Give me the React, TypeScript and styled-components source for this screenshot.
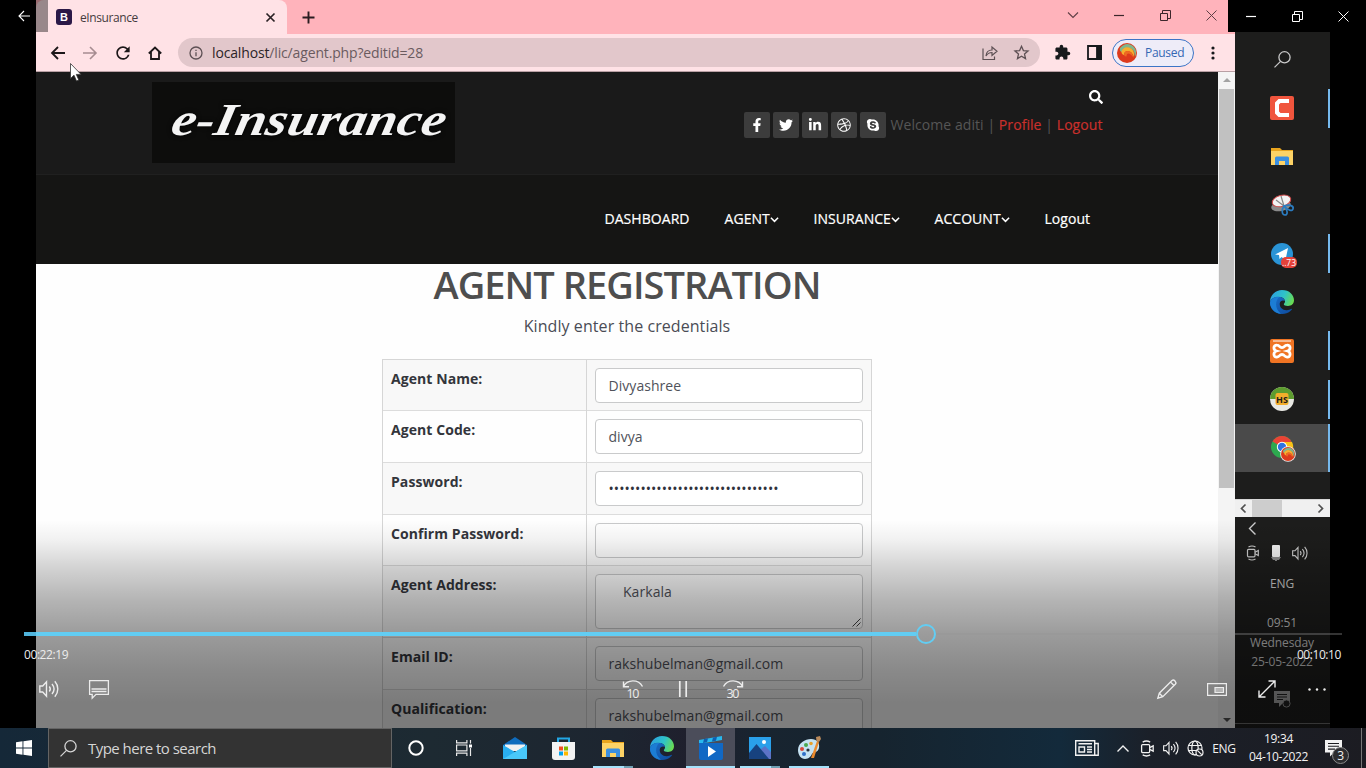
import React from 'react';
import styled, { createGlobalStyle } from 'styled-components';
import { FaFacebookF, FaTwitter, FaLinkedinIn, FaDribbble, FaSkype, FaSearch } from 'react-icons/fa';
import { MdExtension, MdRefresh } from 'react-icons/md';

const GlobalStyle = createGlobalStyle`
  * { box-sizing: border-box; }
  body { margin: 0; background: #000; overflow: hidden; }
  svg { display: block; flex: none; overflow: visible; }
`;

const sans = `'Open Sans', 'Noto Sans', sans-serif`;

const Desktop = styled.div`
  width: 1366px;
  height: 768px;
  display: flex;
  flex-direction: column;
  font-family: ${sans};
  background: #000;
`;

const Player = styled.main`
  position: relative;
  height: 728px;
  padding: 0 36px;
  display: flex;
`;

/* ---------- recorded browser ---------- */

const Browser = styled.section`
  width: 1199px;
  height: 728px;
  display: flex;
  flex-direction: column;
  overflow: hidden;
`;

const TabStrip = styled.div`
  height: 34px;
  display: flex;
  align-items: stretch;
  background: #ffb3bb;
`;

const Tab = styled.div`
  width: 251px;
  padding: 0 12px 0 20px;
  display: flex;
  align-items: center;
  border-radius: 8px 8px 0 0;
  background: #ffe2e6;
`;

const Favicon = styled.div`
  width: 16px;
  height: 16px;
  border-radius: 3px;
  background: #2b1847;
  color: #fff;
  font: 700 11px/16px 'Liberation Sans', sans-serif;
  text-align: center;
`;

const TabTitle = styled.span`
  flex: 1;
  margin-left: 8px;
  font-size: 12px;
  letter-spacing: -0.4px;
  color: #453b3e;
`;

const TabActions = styled.div`
  flex: 1;
  padding: 0 18px 4px 15px;
  display: flex;
  align-items: center;
  justify-content: space-between;
`;

const NewTab = styled.span`
  padding-top: 4px;
`;

const WindowIcons = styled.div`
  display: flex;
  align-items: center;
  gap: 35.5px;
`;

const Toolbar = styled.div`
  height: 38px;
  padding: 0 13px 0 15px;
  display: flex;
  align-items: center;
  background: #ffe2e6;
  border-bottom: 1px solid #b9a0a4;
`;

const NavIcons = styled.div`
  width: 127px;
  display: flex;
  align-items: center;
  gap: 17px;
  color: #1c1719;
  > :last-child { margin-left: -2px; }
`;

const AddressBar = styled.div`
  width: 862px;
  height: 29px;
  border-radius: 15px;
  padding: 0 11px 0 11px;
  display: flex;
  align-items: center;
  background: #e2c7cb;
`;

const Url = styled.span`
  flex: 1;
  margin-left: 9px;
  font-size: 14px;
  letter-spacing: -0.15px;
  color: #6a5b5f;
  b { font-weight: 400; color: #2b2427; }
`;

const AddressActions = styled.div`
  display: flex;
  gap: 16px;
`;

const ToolbarEnd = styled.div`
  margin-left: 14px;
  display: flex;
  align-items: center;
  color: #17191c;
  gap: 15.5px;
`;

const ProfilePill = styled.div`
  width: 82px;
  height: 28px;
  margin: 0 1px 0 -5px;
  padding-left: 4px;
  display: flex;
  align-items: center;
  gap: 8px;
  border: 1.5px solid #3c74c6;
  border-radius: 14px;
  background: #eeecf8;
  color: #3568b4;
  font-size: 12px;
  letter-spacing: -0.3px;
`;

const Viewport = styled.div`
  height: 656px;
  display: flex;
`;

const Page = styled.div`
  width: 1182px;
  height: 656px;
  overflow: hidden;
  background: #fefefe;
`;

const TopBar = styled.header`
  height: 102px;
  padding: 10px 115.5px 0 116px;
  display: flex;
  justify-content: space-between;
  background: #1a1a1a;
`;

const Logo = styled.div`
  width: 303px;
  height: 81px;
  display: flex;
  align-items: center;
  justify-content: center;
  background: #0d0d0c;
  span {
    padding: 0 2px 6px 12px;
    font: italic 700 46px/1 'Liberation Serif', serif;
    color: #f4f4f4;
    text-shadow: 0 0 5px #000;
    white-space: nowrap;
    transform: scaleX(1.19) skewX(-10deg);
  }
`;

const Account = styled.div`
  display: flex;
  flex-direction: column;
  align-items: flex-end;
  color: #fff;
  padding-top: 8px;
  gap: 8px;
`;

const AccountRow = styled.div`
  display: flex;
  align-items: center;
  white-space: nowrap;
`;

const Social = styled.span`
  width: 26px;
  height: 26px;
  margin-right: 3px;
  border-radius: 2px;
  display: flex;
  align-items: center;
  justify-content: center;
  background: #3c3c3c;
  font-size: 14px;
`;

const Welcome = styled.span`
  margin-left: 1px;
  padding-bottom: 2px;
  font-size: 14px;
  letter-spacing: 0.07px;
  color: #565656;
  i { font-style: normal; color: #c9302c; -webkit-text-stroke: 0.2px #c9302c; }
`;

const Menu = styled.nav`
  height: 90px;
  padding: 0 127.5px 2px 0;
  display: flex;
  align-items: center;
  justify-content: flex-end;
  gap: 34px;
  background: #151514;
  border-top: 1px solid #202020;
  color: #fff;
  font-size: 14px;
  letter-spacing: 0.05px;
  -webkit-text-stroke: 0.2px #fff;
`;

const MenuItem = styled.span<{ $w: number }>`
  width: ${p => p.$w}px;
  display: flex;
  align-items: center;
  white-space: nowrap;
  svg { margin-top: 3px; }
`;

const Title = styled.h1`
  margin: 0;
  text-align: center;
  font-size: 38px;
  line-height: 40px;
  font-weight: 600;
  letter-spacing: -0.95px;
  color: #4e4e4e;
`;

const Subtitle = styled.p`
  margin: 12px 0 22px;
  text-align: center;
  font-size: 16px;
  line-height: 21px;
  letter-spacing: 0.07px;
  color: #4a4c55;
`;

const Form = styled.div`
  width: 490px;
  margin: 0 auto;
  border: 1px solid #d6d6d6;
  border-bottom: 0;
`;

const Row = styled.div<{ $h: number; $odd?: boolean }>`
  height: ${p => p.$h}px;
  display: grid;
  grid-template-columns: 203px 1fr;
  background: ${p => (p.$odd ? '#f8f8f8' : '#fefefe')};
  border-bottom: 1px solid #dcdcdc;
`;

const Label = styled.label`
  padding: 8.5px 8px;
  font-size: 14px;
  line-height: 20px;
  font-weight: 700;
  color: #33353b;
  letter-spacing: 0.07px;
`;

const Cell = styled.div`
  padding: 8px;
  border-left: 1px solid #d6d6d6;
`;

const Field = styled.div<{ $tall?: boolean; $secret?: boolean }>`
  position: relative;
  height: ${p => (p.$tall ? 55 : 35)}px;
  padding: ${p => (p.$tall ? '6.5px 27px' : p.$secret ? '7px 12.5px' : '6.5px 12.5px')};
  border: 1px solid #c9cacb;
  border-radius: 4px;
  background: #fff;
  font-size: 14px;
  line-height: 20px;
  letter-spacing: 0.05px;
  color: ${p => (p.$secret ? '#30323c' : '#50525a')};
  white-space: nowrap;
`;

const Grip = styled.span`
  position: absolute;
  right: 1px;
  bottom: 1px;
`;

const VScroll = styled.div`
  width: 17px;
  display: flex;
  flex-direction: column;
  align-items: center;
  background: #f4f4f4;
  padding-bottom: 6px;
`;

const VThumb = styled.div`
  width: 15px;
  height: 399px;
  margin: 7px 0 auto;
  background: #c1c1c1;
`;

/* ---------- recorded vertical taskbar ---------- */

const SideBar = styled.aside`
  width: 95px;
  height: 728px;
  display: flex;
  flex-direction: column;
  background: #1d1d1c;
`;

const SideApps = styled.div`
  height: 499px;
  padding-top: 35.5px;
`;

const SideSlot = styled.div<{ $bar?: boolean; $active?: boolean }>`
  height: 48.5px;
  padding-right: 1px;
  display: flex;
  align-items: center;
  justify-content: center;
  background: ${p =>
    p.$active
      ? 'linear-gradient(to left, #76b9ed 2px, #4a4a4a 2px)'
      : p.$bar
        ? 'linear-gradient(#76b9ed, #76b9ed) right center / 2px 39px no-repeat'
        : 'none'};
`;

const HScroll = styled.div`
  height: 18px;
  border-top: 1px solid #d8d8d8;
  display: flex;
  align-items: center;
  justify-content: space-between;
  padding: 0 7px 0 6px;
  color: #505050;
  background: linear-gradient(to right, #f0f0f0 17px, #cdcdcd 17px 47px, #f0f0f0 47px);
`;

const SideTray = styled.div`
  height: 211px;
  flex: none;
  display: flex;
  flex-direction: column;
  align-items: center;
  font-size: 12px;
  line-height: 16px;
  letter-spacing: -0.1px;
  color: #cfcfcf;
`;

const SideIconRow = styled.div<{ $top: number; $left?: number; $gap?: number }>`
  width: 95px;
  margin-top: ${p => p.$top}px;
  padding-left: ${p => p.$left ?? 0}px;
  display: flex;
  align-items: center;
  gap: ${p => p.$gap ?? 0}px;
`;

const SideText = styled.span<{ $top: number }>`
  margin-top: ${p => p.$top}px;
  padding-right: 1px;
`;

const SideEdge = styled.div`
  width: 95px;
  margin-top: auto;
  height: 5px;
  border-top: 1px solid #6c6c6c;
`;

/* ---------- player overlay ---------- */

const Overlay = styled.div`
  position: absolute;
  inset: 0;
  display: flex;
  flex-direction: column;
  justify-content: space-between;
  color: #ececec;
`;

const OverlayTop = styled.div`
  display: flex;
  justify-content: space-between;
`;

const BackButton = styled.div`
  width: 48px;
  height: 32px;
  display: flex;
  align-items: center;
  justify-content: center;
  background: rgba(0, 0, 0, 0.4);
`;

const PlayerWindow = styled.div`
  width: 138px;
  height: 32px;
  display: flex;
  background: #000;
  > * { width: 46px; display: flex; align-items: center; justify-content: center; }
`;

const Shade = styled.div`
  height: 208px;
  padding: 103px 24px 0;
  background: linear-gradient(
    rgba(0, 0, 0, 0) 0px,
    rgba(0, 0, 0, 0.05) 20px,
    rgba(0, 0, 0, 0.17) 47px,
    rgba(0, 0, 0, 0.29) 80px,
    rgba(0, 0, 0, 0.39) 114px,
    rgba(0, 0, 0, 0.46) 150px,
    rgba(0, 0, 0, 0.505) 184px,
    rgba(0, 0, 0, 0.505) 208px
  );
`;

const Progress = styled.div`
  height: 22px;
  display: flex;
  align-items: center;
`;

const Played = styled.div`
  width: 892px;
  height: 4px;
  background: linear-gradient(to right, #4fb3dc 12px, #62cdf3 12px);
`;

const Knob = styled.div`
  width: 20px;
  height: 20px;
  border: 2px solid #62cdf3;
  border-radius: 50%;
`;

const Remaining = styled.div`
  flex: 1;
  height: 2px;
  background: rgba(150, 150, 150, 0.35);
`;

const Times = styled.div`
  display: flex;
  justify-content: space-between;
  font-size: 12px;
  line-height: 16px;
  letter-spacing: -0.42px;
  padding: 2px 1px 0 0;
`;

const Controls = styled.div`
  margin-top: 1px;
  height: 50px;
  display: flex;
  justify-content: space-between;
`;

const Group = styled.div<{ $w: number }>`
  width: ${p => p.$w}px;
  display: flex;
`;

const Control = styled.div`
  width: 50px;
  height: 50px;
  display: flex;
  align-items: center;
  justify-content: center;
`;

const Cursor = styled.div`
  position: absolute;
  left: 70px;
  top: 63px;
`;

/* ---------- host taskbar ---------- */

const TaskBar = styled.footer`
  height: 40px;
  display: flex;
  background: linear-gradient(to right, #152838 0, #1d2a32 430px, #1d2530 620px, #1f1f2d 690px, #182430 760px, #16242f 880px, #132a3b 1060px, #1b2029 1150px, #1c1c22 1366px);
`;

const Start = styled.div`
  width: 48px;
  display: flex;
  align-items: center;
  justify-content: center;
`;

const Search = styled.div`
  width: 344px;
  padding-left: 11px;
  display: flex;
  align-items: center;
  gap: 11px;
  border: 1px solid #646464;
  background: #333;
  color: #d6d6d6;
  font-size: 15px;
  letter-spacing: -0.53px;
`;

const Task = styled.div<{ $w?: number; $active?: boolean; $line?: string }>`
  width: ${p => p.$w ?? 49}px;
  display: flex;
  align-items: center;
  justify-content: center;
  background-color: ${p => (p.$active ? '#4b4d5a' : 'transparent')};
  background-image: ${p => p.$line ?? 'none'};
  background-position: left bottom;
  background-size: 100% 2px;
  background-repeat: no-repeat;
`;

const TaskGap = styled.div`
  width: 2px;
`;

const HostTray = styled.div`
  flex: 1;
  display: flex;
  align-items: center;
  justify-content: flex-end;
  color: #f2f2f2;
  font-size: 12px;
  letter-spacing: -0.35px;
`;

const TrayItem = styled.div<{ $w: number }>`
  width: ${p => p.$w}px;
  height: 40px;
  display: flex;
  align-items: center;
  justify-content: center;
`;

const Clock = styled.div`
  width: 78px;
  padding-right: 3px;
  text-align: center;
  line-height: 18px;
  white-space: nowrap;
`;

const Notice = styled.div`
  position: relative;
  width: 42px;
  height: 40px;
  display: flex;
  align-items: center;
  padding-left: 6px;
`;

const Badge = styled.span`
  position: absolute;
  left: 13px;
  top: 19px;
  width: 17px;
  height: 17px;
  border: 1px solid #8a8a8a;
  border-radius: 50%;
  background: #2d2d30;
  font-size: 12px;
  line-height: 15px;
  text-align: center;
`;

const DesktopEdge = styled.div`
  width: 5px;
  height: 40px;
  border-left: 1px solid #777;
`;

/* ---------- icons ---------- */

type IconProps = {
  w: number;
  h?: number;
  s?: string;
  sw?: number;
  children: React.ReactNode;
};

const Icon = ({ w, h = w, s = 'currentColor', sw = 1.2, children }: IconProps) => (
  <svg width={w} height={h} viewBox={`0 0 ${w} ${h}`} fill="none" stroke={s} strokeWidth={sw}>
    {children}
  </svg>
);

const ArrowLeft = ({ c = 'currentColor', w = 14, sw = 1.8 }) => (
  <Icon w={w} s={c} sw={sw}>
    <path d={`M${w} ${w / 2}H1M${w / 2} 1L1 ${w / 2}L${w / 2} ${w - 1}`} />
  </Icon>
);

const Restore = ({ c = 'currentColor' }) => (
  <Icon w={11} s={c} sw={1}>
    <path d="M.5 3.5h7v7h-7zM2.5 3V.5h8v8H8" />
  </Icon>
);

const CloseX = ({ c = 'currentColor', w = 11, sw = 1 }) => (
  <Icon w={w} s={c} sw={sw}>
    <path d={`M.5 .5L${w - 0.5} ${w - 0.5}M${w - 0.5} .5L.5 ${w - 0.5}`} />
  </Icon>
);

const Minimize = ({ c = 'currentColor' }) => (
  <Icon w={10} s={c} sw={1.2}>
    <path d="M0 5.5h10" />
  </Icon>
);

const Magnifier = ({ w = 17, c = 'currentColor' }) => (
  <svg width={w} height={w} viewBox="0 0 17 17" fill="none" stroke={c} strokeWidth="1.3">
    <circle cx="10.5" cy="6.3" r="5.6" />
    <path d="M6.5 10.4L.5 16.4" />
  </svg>
);

const Volume = ({ w = 20 }) => (
  <svg width={w} height={w * 0.9} viewBox="0 0 20 18" fill="none" stroke="currentColor" strokeWidth="1.4">
    <path d="M.8 6v6h2.9l3.8 4.2V1.8L3.7 6z" />
    <path d="M10.3 6.5c1.2 1.500 1.2 3.500 0 5M13 4c2.500 3 2.500 7 0 10M15.800 1.200c4 4.500 4 11 0 15.600" />
  </svg>
);

const Meet = ({ w = 14 }) => (
  <svg width={w} height={w} viewBox="0 0 14 14" fill="none" stroke="currentColor" strokeWidth="1.2">
    <rect x="1.500" y="3.300" width="7.500" height="7.500" rx="1" />
    <path d="M9 6.200l3.300-1.700v5l-3.300-1.700M2.500 1Q6 -1 9.500 1M2.500 13Q6 15 9.500 13" />
  </svg>
);

const Folder = () => (
  <Icon w={22} h={19} s="none">
    <path d="M0 1h9l2 2h11v15H0z" fill="#e9a51e" />
    <path d="M0 4h22v14H0z" fill="#fdd366" />
    <path d="M4 18v-7q0-1.500 1.500-1.500h11q1.500 0 1.500 1.500v7h-4v-4H8v4z" fill="#3b8fe0" />
  </Icon>
);

const Edge = () => (
  <svg width="24" height="24" viewBox="0 0 24 24">
    <defs>
      <linearGradient id="edgeTop" x1="0" y1="0.3" x2="1" y2="0.6">
        <stop offset="0" stopColor="#2b9fe0" />
        <stop offset="0.55" stopColor="#2fc3c8" />
        <stop offset="1" stopColor="#6bdc4f" />
      </linearGradient>
      <linearGradient id="edgeLow" x1="0" y1="0" x2="1" y2="1">
        <stop offset="0" stopColor="#1b6fc8" />
        <stop offset="1" stopColor="#0d4b9e" />
      </linearGradient>
    </defs>
    <path d="M0 12C0 5 5.500 0 12 0c7.500 0 12 5 12 10.300 0 3.700-2.800 5.700-6 5.700-2.500 0-4.200-.8-4.200-1.700 0-.6 1.200-1 1.200-2.800C15 9 12.500 7 9 7 4.500 7 1 9 0 12z" fill="url(#edgeTop)" />
    <path d="M0 12.500C.5 8.500 4.500 6.800 8.500 6.800c3.500 0 6 1.700 6.400 4.200-1.500-1-5-.8-5.200 2.800C9.500 18 13.500 21 18 20c2-.5 3.300-1.400 4-1.300.6.2-3 5.300-10 5.300C5 24 0 18.500 0 12.500z" fill="url(#edgeLow)" />
    <path d="M9.500 7C5.500 10 4 18 11 23.800 5 23.500 0 18.500 0 12.500 1 8.800 5 6.800 9.500 7z" fill="#1c7dd4" />
  </svg>
);

const Swirl = ({ w = 20 }) => (
  <svg width={w} height={w} viewBox="0 0 20 20">
    <circle cx="10" cy="10" r="10" fill="#dd3a1c" />
    <path d="M3 5Q9-2 16 3q5 5 2 11Q18 6 12 5 6 4 5 9 2 8 3 5z" fill="#7fb58c" />
    <path d="M4.500 8Q7 3 12 4.500 18 6 17 14q-2-6-6-6-4 0-4 4-3-1-2.500-4z" fill="#f5b02e" />
    <path d="M7 12q0-4 4-4 5 1 5.500 7-2-4-5-4.500-2 0-2 3-2 0-2.500-1.500z" fill="#ee6a22" />
  </svg>
);

const Caret = () => (
  <Icon w={9} h={6} sw={1.5}>
    <path d="M.9 .8L4.500 4.400L8.100 .8" />
  </Icon>
);

const Jump = ({ text, flip }: { text: string; flip?: boolean }) => (
  <svg width="22" height="20" viewBox="0 0 22 20">
    <g transform={flip ? 'matrix(-1 0 0 1 22 0)' : undefined} fill="none" stroke="currentColor" strokeWidth="1.400">
      <path d="M1.500 7.500C5 .5 16 -.5 20.500 7.500M1.500 2.500v5.300h5.500" />
    </g>
    <text x="11" y="18.500" fontFamily="Open Sans, sans-serif" fontSize="12.500" textAnchor="middle" textLength="13" fill="currentColor">{text}</text>
  </svg>
);

const Note = ({ w = 17 }) => (
  <svg width={w} height={w} viewBox="0 0 17 17">
    <path d="M0 0h17v12.500H9L5 16.500v-4H0z" fill="currentColor" />
    <path d="M3 3.500h11M3 6.300h11M3 9.100h7" stroke="#1c1c20" strokeWidth="1.100" />
  </svg>
);

const socials = [FaFacebookF, FaTwitter, FaLinkedinIn, FaDribbble, FaSkype];

const BrowserChrome = () => (
  <>
    <TabStrip>
      <Tab>
        <Favicon>B</Favicon>
        <TabTitle>eInsurance</TabTitle>
        <CloseX w={9} sw={1.7} c="#2a2124" />
      </Tab>
      <TabActions>
        <NewTab><Icon w={13} s="#2a1c20" sw={1.9}><path d="M6.500 .5v12M.5 6.500h12" /></Icon></NewTab>
        <WindowIcons>
          <Icon w={12} h={7} s="#5e3f45" sw={1.1}><path d="M1 .5l5 5l5-5" /></Icon>
          <Minimize c="#3c262b" />
          <Restore c="#3c262b" />
          <CloseX c="#5e3f45" />
        </WindowIcons>
      </TabActions>
    </TabStrip>
    <Toolbar>
      <NavIcons>
        <ArrowLeft />
        <Icon w={14} s="#a68c91" sw={1.6}><path d="M1 7h13M8 1l6 6l-6 6" /></Icon>
        <MdRefresh size={20} />
        <Icon w={14} sw={1.8}><path d="M.8 7.500L7 1.500l6.200 6M3 6V13h8V6" /></Icon>
      </NavIcons>
      <AddressBar>
        <Icon w={14} s="#5d5054" sw={1.3}><circle cx="7" cy="7" r="6" /><path d="M7 6.300v4M7 3.700v1.400" /></Icon>
        <Url><b>localhost</b>/lic/agent.php?editid=28</Url>
        <AddressActions>
          <Icon w={16} s="#5d5054" sw={1.2}><path d="M1 3.500v11h11.500v-3M4 11c.3-4 2.500-6 6-6V2l5 4.300l-5 4.200v-3C7.500 7.500 5.500 8.500 4 11z" /></Icon>
          <Icon w={15} s="#5d5054" sw={1.3}><path d="M7.500 1.300l1.900 4.300 4.600.4-3.500 3 1 4.600-4-2.400-4 2.400 1-4.600-3.500-3 4.600-.4z" /></Icon>
        </AddressActions>
      </AddressBar>
      <ToolbarEnd>
        <MdExtension size={17} />
        <Icon w={15} sw={1.8}><path d="M1 1h13v13H1z" /><path d="M10 1h4v13h-4z" fill="currentColor" /></Icon>
        <ProfilePill><Swirl />Paused</ProfilePill>
        <svg width="4" height="14" fill="currentColor"><circle cx="2" cy="2" r="1.600" /><circle cx="2" cy="7" r="1.600" /><circle cx="2" cy="12" r="1.600" /></svg>
      </ToolbarEnd>
    </Toolbar>
  </>
);

const WebPage = () => (
  <Page>
    <TopBar>
      <Logo><span>e-Insurance</span></Logo>
      <Account>
        <FaSearch size={14} />
        <AccountRow>
          {socials.map((S, i) => <Social key={i}><S /></Social>)}
          <Welcome>Welcome aditi | <i>Profile</i> | <i>Logout</i></Welcome>
        </AccountRow>
      </Account>
    </TopBar>
    <Menu>
      <MenuItem $w={86}>DASHBOARD</MenuItem>
      <MenuItem $w={55}>AGENT<Caret /></MenuItem>
      <MenuItem $w={87}>INSURANCE<Caret /></MenuItem>
      <MenuItem $w={76}>ACCOUNT<Caret /></MenuItem>
      <MenuItem $w={46}>Logout</MenuItem>
    </Menu>
    <Title>AGENT REGISTRATION</Title>
    <Subtitle>Kindly enter the credentials</Subtitle>
    <Form>
      <Row $h={51} $odd><Label>Agent Name:</Label><Cell><Field>Divyashree</Field></Cell></Row>
      <Row $h={52}><Label>Agent Code:</Label><Cell><Field>divya</Field></Cell></Row>
      <Row $h={52} $odd><Label>Password:</Label><Cell><Field $secret>{'•'.repeat(32)}</Field></Cell></Row>
      <Row $h={51}><Label>Confirm Password:</Label><Cell><Field /></Cell></Row>
      <Row $h={72} $odd>
        <Label>Agent Address:</Label>
        <Cell>
          <Field $tall>
            Karkala
            <Grip><Icon w={9} s="#444" sw={1}><path d="M.5 8.500l8-8M4.500 8.500l4-4" /></Icon></Grip>
          </Field>
        </Cell>
      </Row>
      <Row $h={52}><Label>Email ID:</Label><Cell><Field>rakshubelman@gmail.com</Field></Cell></Row>
      <Row $h={52} $odd><Label>Qualification:</Label><Cell><Field>rakshubelman@gmail.com</Field></Cell></Row>
    </Form>
  </Page>
);

const RecordedTaskbar = () => (
  <SideBar>
    <SideApps>
      <SideSlot><Magnifier c="#c9c9c9" /></SideSlot>
      <SideSlot $bar>
        <Icon w={24} s="none"><rect width="24" height="24" rx="2" fill="#f0553d" /><path d="M19 3v4H10.500L9 8.500v7L10.500 17H19v4H8.500L5 17.500v-11L8.500 3z" fill="#fff" /></Icon>
      </SideSlot>
      <SideSlot><Folder /></SideSlot>
      <SideSlot>
        <Icon w={23} s="none">
          <ellipse cx="10" cy="12" rx="10" ry="5" fill="#8a8a8a" transform="rotate(-12 10 12)" />
          <ellipse cx="10.500" cy="7" rx="9.500" ry="5.500" fill="#f3f3f3" stroke="#cf4a4a" strokeWidth="1" transform="rotate(-15 10 7)" />
          <path d="M10 2l3 10M5 6l8 6" stroke="#888" strokeWidth="1.200" />
          <path d="M13 12c6-2 10 0 9 3s-5 1-9-3c-3 4-2 9 1 9s3-5-1-9z" stroke="#2b7cc0" strokeWidth="1.700" fill="none" />
        </Icon>
      </SideSlot>
      <SideSlot $bar>
        <Icon w={24} s="none">
          <circle cx="12" cy="12" r="11" fill="#2a94d6" />
          <path d="M5 12.500L18 6l-2.500 12-4-3-2 2-.5-4z" fill="#fff" />
          <rect x="11" y="15" width="16" height="11" rx="5" fill="#e5423a" />
          <text x="19" y="23.500" fontFamily="Open Sans, sans-serif" fontSize="8.500" textAnchor="middle" fill="#fff">..73</text>
        </Icon>
      </SideSlot>
      <SideSlot><Edge /></SideSlot>
      <SideSlot $bar>
        <Icon w={24} s="none">
          <rect width="24" height="24" rx="2" fill="#f07423" />
          <path d="M7 6.200C3 6 3 11 6.500 12 3 13 3 18.500 7 18c3 0 2-2.500 5-2.500s2 2.500 5 2.500c4 .5 4-5 .5-6C21 11 21 6 17 6.200c-3 0-2 2.500-5 2.500s-2-2.500-5-2.500z" stroke="#fff" strokeWidth="2.800" fill="none" />
          <path d="M3 2h18" stroke="#fff" strokeWidth="1" />
        </Icon>
      </SideSlot>
      <SideSlot $bar>
        <Icon w={24} s="none">
          <circle cx="12" cy="12" r="12" fill="#e9e9e4" />
          <path d="M0 12a12 12 0 0 1 24 0z" fill="#5d9c2f" />
          <rect x="5.500" y="6" width="13" height="12" rx="2" fill="#f3ae2b" />
          <text x="12" y="15.500" fontFamily="Open Sans, sans-serif" fontWeight="700" fontSize="9" textAnchor="middle" fill="#1b1b1b">HS</text>
        </Icon>
      </SideSlot>
      <SideSlot $active>
        <Icon w={24} s="none">
          <circle cx="12" cy="11" r="11" fill="#2da94f" />
          <path d="M12 11L2.500 5.500A11 11 0 0 1 21.500 5.500z" fill="#ea4335" />
          <path d="M12 11V6h10a11 11 0 0 1-10 16z" fill="#fbc116" />
          <circle cx="12" cy="11" r="5.200" fill="#fff" /><circle cx="12" cy="11" r="4.200" fill="#2f73e0" />
          <g transform="translate(11 11)"><circle cx="7" cy="7" r="7.800" fill="#f1f1f1" /><Swirl w={14} /></g>
        </Icon>
      </SideSlot>
    </SideApps>
    <HScroll>
      <Icon w={5} h={9} sw={1.7}><path d="M4.500 .5l-4 4l4 4" /></Icon>
      <Icon w={5} h={9} sw={1.7}><path d="M.5 .5l4 4l-4 4" /></Icon>
    </HScroll>
    <SideTray>
      <SideIconRow $top={5} $left={14}><Icon w={7} h={13} sw={1.4}><path d="M6.500 .5l-6 6l6 6" /></Icon></SideIconRow>
      <SideIconRow $top={10} $left={11} $gap={11}>
        <Meet />
        <Icon w={10} h={16} s="none"><rect x="1" width="8" height="12" rx="1" fill="#f4f4f4" /><path d="M0 12h10l-2 3H6v1H4v-1H2z" fill="#8c8c8c" /></Icon>
        <Volume w={16} />
      </SideIconRow>
      <SideText $top={15}>ENG</SideText>
      <SideText $top={23}>09:51</SideText>
      <SideText $top={4}>Wednesday</SideText>
      <SideText $top={3}>25-05-2022</SideText>
      <SideIconRow $top={21} $left={39}>
        <Icon w={17} h={17} s="none">
          <path d="M0 0h16v12H9l-4 4v-4H0z" fill="#a8a8a8" />
          <path d="M3 3.500h10M3 6h10M3 8.500h6" stroke="#222" strokeWidth="1" />
          <circle cx="12.500" cy="12.500" r="3.600" fill="#222" stroke="#999" strokeWidth="1" />
        </Icon>
      </SideIconRow>
      <SideEdge />
    </SideTray>
  </SideBar>
);

const PlayerOverlay = () => (
  <Overlay>
    <OverlayTop>
      <BackButton><ArrowLeft w={12} sw={1.1} c="#fff" /></BackButton>
      <PlayerWindow>
        <div><Minimize c="#fff" /></div>
        <div><Restore c="#fff" /></div>
        <div><CloseX c="#fff" /></div>
      </PlayerWindow>
    </OverlayTop>
    <Shade>
      <Progress><Played /><Knob /><Remaining /></Progress>
      <Times><span>00:22:19</span><span>00:10:10</span></Times>
      <Controls>
        <Group $w={200}>
          <Control><Volume /></Control>
          <Control><Icon w={20} h={19} sw={1.3}><path d="M.6 .6h18.800v13.800H7l-3.800 3.800v-3.800H.6zM2.500 9h15M2.500 11.500h15" /></Icon></Control>
        </Group>
        <Group $w={150}>
          <Control><Jump text="10" /></Control>
          <Control><Icon w={8} h={16} sw={1.7}><path d="M.8 0v16M7.200 0v16" /></Icon></Control>
          <Control><Jump text="30" flip /></Control>
        </Group>
        <Group $w={200}>
          <Control><Icon w={20} sw={1.3}><path d="M.8 19.200l1.500-5L15 1.500q1.500-1.200 3 .5t.5 3L5.800 17.700zM2.300 14.200l3.500 3.500M13.500 3l3.500 3.500" /></Icon></Control>
          <Control><Icon w={20} h={13}><path d="M.6 .6h18.800v11.800H.6z" /><path d="M8 4.500h8.500v5H8z" fill="currentColor" fillOpacity=".5" /></Icon></Control>
          <Control><Icon w={18} sw={1.4}><path d="M1 17L17 1M10.500 1H17v6.500M1 10.500V17h6.500" /></Icon></Control>
          <Control><svg width="18" height="3" fill="currentColor"><circle cx="1.500" cy="1.500" r="1.200" /><circle cx="9" cy="1.500" r="1.200" /><circle cx="16.500" cy="1.500" r="1.200" /></svg></Control>
        </Group>
      </Controls>
    </Shade>
    <Cursor>
      <Icon w={11} h={19} s="#333" sw={0.8}><path d="M.5 .5v15l3.500-3.300l2.500 5.800l2.300-1l-2.500-5.600h4.700z" fill="#fff" /></Icon>
    </Cursor>
  </Overlay>
);

const twoTone = 'linear-gradient(to right, transparent 5px, #a5e2fb 5px 36px, #6f9fb2 36px 45px, transparent 45px)';
const activeLine = 'linear-gradient(#a5e2fb, #a5e2fb)';
const openLine = 'linear-gradient(to right, transparent 5px, #a5e2fb 5px 45px, transparent 45px)';

const HostTaskbar = () => (
  <TaskBar>
    <Start>
      <Icon w={16} s="none"><path d="M0 2.200L6.500 1.300v6.200H0zM7.400 1.200L16 0v7.500H7.400zM0 8.400h6.500v6.300L0 13.800zM7.400 8.400H16V16l-8.600-1.200z" fill="#fff" /></Icon>
    </Start>
    <Search><Magnifier />Type here to search</Search>
    <Task $w={48}><Icon w={16} s="#fff" sw={2}><circle cx="8" cy="8" r="6.700" /></Icon></Task>
    <Task $w={48}>
      <Icon w={16} s="#e8e8e8" sw={1.2}><path d="M.6 0v2.800h10.300V0M.6 16v-2.800h10.300V16M.6 5h10.300v5.800H.6zM14.500 0v3.500M14.500 8v8" /><path d="M13 4.500h3v3h-3z" fill="#fff" stroke="none" /></Icon>
    </Task>
    <TaskGap />
    <Task>
      <Icon w={24} h={22} s="none"><path d="M0 8L12 0l12 8v5H0z" fill="#0f6cbd" /><path d="M2 7.500h20V14H2z" fill="#f1f1f1" /><path d="M0 8l12 7 12-7v14H0z" fill="#29aef0" /><path d="M0 22l24-14v14z" fill="#49c8fa" /></Icon>
    </Task>
    <Task>
      <Icon w={23} s="none"><path d="M6 6V1.500h11V6" stroke="#22a7e5" strokeWidth="2" /><path d="M0 5h23v15q0 3-3 3H3q-3 0-3-3z" fill="#f3f3f3" /><path d="M7 9.500h4v4H7z" fill="#f25022" /><path d="M12 9.500h4v4h-4z" fill="#7fba00" /><path d="M7 14.500h4v4H7z" fill="#00a4ef" /><path d="M12 14.500h4v4h-4z" fill="#ffb900" /></Icon>
    </Task>
    <Task $line={twoTone}><Folder /></Task>
    <Task><Edge /></Task>
    <Task $active $line={activeLine}>
      <Icon w={24} s="none"><path d="M0 4L23 0v4L0 8z" fill="#29b8ee" /><path d="M5 3l4-.7-1 4-4 .7zM14 1.500l4-.7-1 4-4 .7z" fill="#0f5fb0" /><path d="M0 7h24v15q0 2-2 2H2q-2 0-2-2z" fill="#1168c4" /><path d="M9 10v11l8-5.500z" fill="#fff" /></Icon>
    </Task>
    <Task $line={twoTone}>
      <Icon w={22} s="none"><path d="M0 0h22v22H0z" fill="#2aa0ea" /><path d="M12 12l4-3 6 6v7H10z" fill="#5c73c7" /><path d="M0 16l7.500-9L20 22H0z" fill="#17427f" /><circle cx="15" cy="5" r="2" fill="#fff" /></Icon>
    </Task>
    <Task $line={openLine}>
      <Icon w={24} s="none">
        <path d="M1 14C1 7 8 3 14 3s9 4 8 9-6 4-7 6-3 5-7 5-7-4-7-9z" fill="#c5e2f2" />
        <circle cx="5" cy="13" r="2" fill="#d8473c" /><circle cx="9" cy="9" r="2" fill="#4aa84f" /><circle cx="14" cy="7.500" r="1.800" fill="#e7a12d" /><circle cx="7" cy="18" r="2" fill="#2f70c9" /><circle cx="11" cy="14" r="1.600" fill="#27313c" />
        <path d="M14 22L20 5l2 1-5 16z" fill="#e98a2e" /><path d="M19.500 5L19 1l4-1 1 3-2 3z" fill="#b98a5b" />
      </Icon>
    </Task>
    <HostTray>
      <TrayItem $w={48}><Icon w={24} h={16} sw={1.4}><path d="M.7 .7h19v14.600H.7zM19.700 3.500h3.500v11.800h-3.500M3.500 3.800h13.500M12 7h5M12 9.500h5M12 12h5" /><path d="M4 7h5.500v5H4z" /></Icon></TrayItem>
      <TrayItem $w={24}><Icon w={12} h={7} sw={1.4}><path d="M.5 6.500L6 1l5.500 5.500" /></Icon></TrayItem>
      <TrayItem $w={24}><Meet w={15} /></TrayItem>
      <TrayItem $w={24}><Volume w={16} /></TrayItem>
      <TrayItem $w={24}>
        <Icon w={16} sw={1.2}><circle cx="8" cy="8" r="7" /><ellipse cx="8" cy="8" rx="3.200" ry="7" /><path d="M1 5.500h14M1 10.500h14" /><circle cx="12.500" cy="12.500" r="3.500" fill="#1c1e25" /><path d="M10.300 10.300l4.400 4.400" /></Icon>
      </TrayItem>
      <TrayItem $w={34}>ENG</TrayItem>
      <Clock>19:34<br />04-10-2022</Clock>
      <Notice><Note /><Badge>3</Badge></Notice>
      <DesktopEdge />
    </HostTray>
  </TaskBar>
);

export default function App() {
  return (
    <Desktop>
      <GlobalStyle />
      <Player>
        <Browser>
          <BrowserChrome />
          <Viewport>
            <WebPage />
            <VScroll>
              <svg width="8" height="10" viewBox="0 0 8 10"><path d="M0 10l4-4 4 4z" fill="#a3a3a3" /></svg>
              <VThumb />
              <svg width="8" height="4" viewBox="0 0 8 4"><path d="M0 0h8l-4 4z" fill="#505050" /></svg>
            </VScroll>
          </Viewport>
        </Browser>
        <RecordedTaskbar />
        <PlayerOverlay />
      </Player>
      <HostTaskbar />
    </Desktop>
  );
}
